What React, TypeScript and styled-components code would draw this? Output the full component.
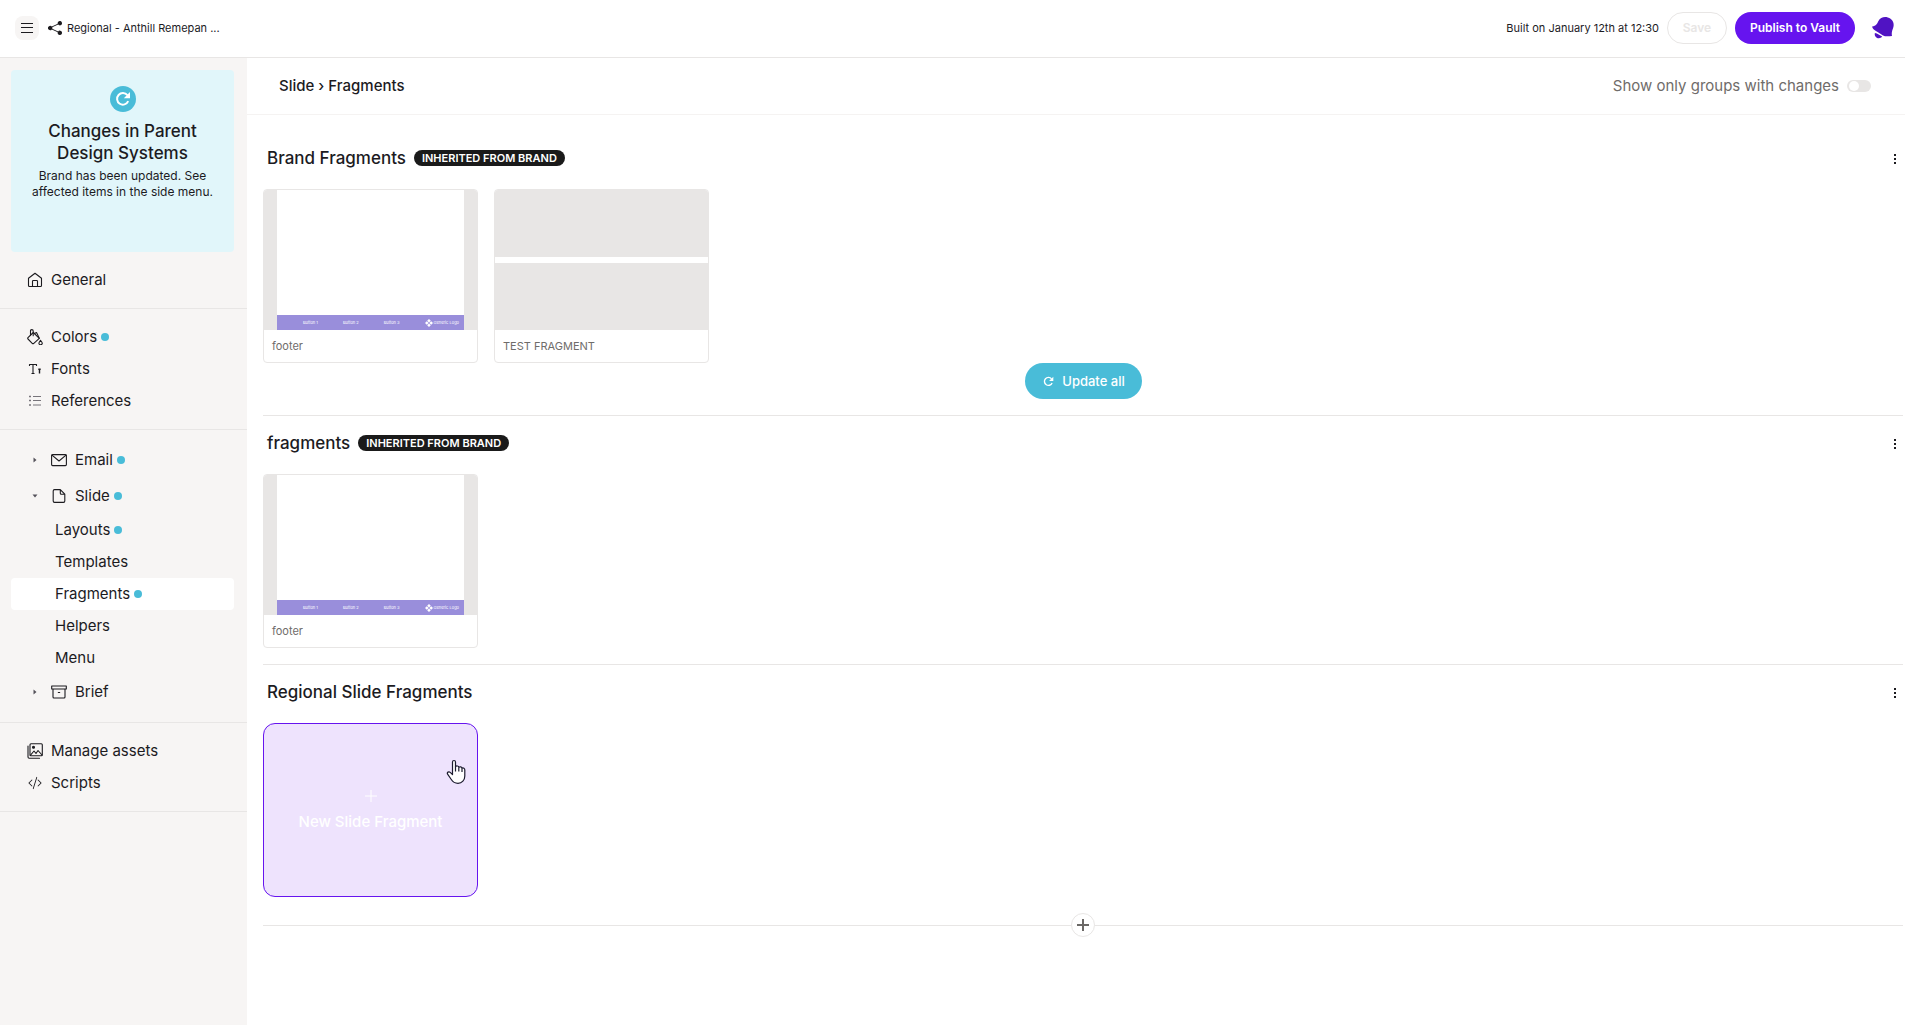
import React from "react";
import styled, { createGlobalStyle, css } from "styled-components";
import { BsCodeSlash, BsShareFill } from "react-icons/bs";

const ink = "#1c1b1f";
const line = "#e8e6e5";
const teal = "#49bcd8";
const violet = "#6614ef";

const GlobalStyle = createGlobalStyle`
  * { box-sizing: border-box; }
  html, body { margin: 0; height: 100%; }
  #root { min-height: 100%; }
  body {
    background: #fff;
    color: ${ink};
    font-family: Inter, "Liberation Sans", sans-serif;
    font-size: 15px;
    line-height: 20px;
  }
  button { font-family: inherit; cursor: pointer; }
  svg { display: block; flex: none; }
`;

const Page = styled.div`
  display: flex;
  flex-direction: column;
  min-height: 100vh;
`;

const TopBar = styled.header`
  display: flex;
  align-items: center;
  justify-content: space-between;
  height: 58px;
  padding: 0 10px 2px 15px;
  border-bottom: 1px solid ${line};
`;

const BarGroup = styled.div<{ $gap: number }>`
  display: flex;
  align-items: center;
  gap: ${(p) => p.$gap}px;
`;

const MenuButton = styled.button`
  display: grid;
  place-items: center;
  width: 24px;
  height: 24px;
  margin-right: 4px;
  padding: 0;
  border: 0;
  border-radius: 8px;
  background: #f7f5f4;
  color: ${ink};
`;

const SmallText = styled.span`
  font-size: 11px;
  line-height: 16px;
`;

const Pill = styled.button<{ $kind: "outline" | "primary" | "update" }>`
  display: flex;
  align-items: center;
  justify-content: center;
  gap: 8px;
  height: 32px;
  padding: 0;
  border: 1px solid transparent;
  border-radius: 18px;
  font-size: 12px;
  font-weight: 600;
  line-height: 16px;
  color: #fff;
  ${(p) =>
    p.$kind === "outline" &&
    css`
      width: 60px;
      border-color: ${line};
      background: #fff;
      color: ${line};
    `}
  ${(p) =>
    p.$kind === "primary" &&
    css`
      width: 120px;
      background: ${violet};
    `}
  ${(p) =>
    p.$kind === "update" &&
    css`
      width: 117px;
      height: 36px;
      padding-left: 2px;
      background: ${teal};
      font-size: 13px;
      font-weight: 500;
    `}
`;

const BellButton = styled.button`
  display: grid;
  place-items: center;
  width: 24px;
  height: 24px;
  margin-left: 8px;
  padding: 0;
  border: 0;
  background: none;
`;

const Body = styled.div`
  display: flex;
  flex: 1;
`;

const Sidebar = styled.aside`
  flex: none;
  width: 247px;
  padding-top: 12px;
  background: #f7f5f4;
`;

const Notice = styled.section`
  display: flex;
  flex-direction: column;
  align-items: center;
  min-height: 182px;
  margin: 0 13px 0 11px;
  padding: 16px 12px;
  border-radius: 4px;
  background: #e1f6fa;
  text-align: center;
`;

const NoticeIcon = styled.span`
  display: grid;
  place-items: center;
  width: 26px;
  height: 26px;
  margin-bottom: 8px;
  border-radius: 50%;
  background: ${teal};
  color: #fff;
`;

const NoticeTitle = styled.h2`
  margin: 0 0 4px;
  max-width: 170px;
  font-size: 17px;
  font-weight: 500;
  line-height: 22px;
`;

const NoticeText = styled.p`
  margin: 0;
  font-size: 12px;
  line-height: 16px;
`;

const NavGroup = styled.ul`
  margin: 0;
  padding: 12px 13px 12px 11px;
  border-bottom: 1px solid ${line};
  list-style: none;
`;

const NavLink = styled.a<{ $level: "top" | "branch" | "leaf"; $active?: boolean }>`
  display: flex;
  align-items: center;
  height: ${(p) => (p.$level === "branch" ? 36 : 32)}px;
  padding-left: ${(p) => (p.$level === "leaf" ? 44 : 16)}px;
  border-radius: 4px;
  background: ${(p) => (p.$active ? "#fff" : "transparent")};
  color: ${ink};
  text-decoration: none;
`;

const IconSlot = styled.span`
  display: grid;
  place-items: center;
  width: 16px;
  margin-right: 8px;
`;

const Dot = styled.span`
  width: 8px;
  height: 8px;
  margin-left: 4px;
  border-radius: 50%;
  background: ${teal};
`;

const Main = styled.main`
  flex: 1;
  min-width: 0;
`;

const CrumbBar = styled.div`
  display: flex;
  align-items: center;
  justify-content: space-between;
  height: 57px;
  padding: 0 34px 0 32px;
  border-bottom: 1px solid #f5f3f2;
`;

const Crumbs = styled.nav`
  display: flex;
  gap: 4px;
  font-weight: 500;

  a {
    color: inherit;
    text-decoration: none;
  }
`;

const SwitchLabel = styled.label`
  display: flex;
  align-items: center;
  gap: 8px;
  color: #6f6c6a;
`;

const Switch = styled.input`
  appearance: none;
  display: flex;
  align-items: center;
  width: 24px;
  height: 12px;
  margin: 0;
  padding: 0 2px;
  border-radius: 6px;
  background: ${line};

  &::before {
    content: "";
    width: 10px;
    height: 10px;
    border-radius: 50%;
    background: #fff;
  }

  &:checked {
    justify-content: flex-end;
    background: ${teal};
  }
`;

const Groups = styled.div`
  padding: 16px 2px 0 16px;
`;

const Group = styled.section<{ $last?: boolean }>`
  display: flex;
  flex-direction: column;
  padding-bottom: 16px;
  border-bottom: ${(p) => (p.$last ? 0 : 1)}px solid ${line};
`;

const GroupHead = styled.header`
  display: flex;
  align-items: center;
  gap: 8px;
  height: 54px;
  margin-bottom: 4px;
  padding-left: 4px;
`;

const GroupTitle = styled.h2`
  margin: 0;
  font-size: 17px;
  font-weight: 500;
  line-height: 24px;
`;

const Tag = styled.span`
  padding: 0 8px;
  border-radius: 8px;
  background: #1a1a1a;
  color: #fff;
  font-size: 11px;
  font-weight: 600;
  line-height: 16px;
  text-transform: uppercase;
`;

const MoreButton = styled.button`
  display: grid;
  place-items: center;
  width: 16px;
  height: 24px;
  margin-left: auto;
  padding: 1px 0 0;
  border: 0;
  background: none;
  color: ${ink};
`;

const Cards = styled.div`
  display: flex;
  flex-wrap: wrap;
  gap: 16px;
`;

const Card = styled.article`
  width: 215px;
  border: 1px solid ${line};
  border-radius: 4px;
  overflow: hidden;
`;

const Preview = styled.div<{ $kind: "slide" | "band" }>`
  display: flex;
  flex-direction: column;
  justify-content: ${(p) => (p.$kind === "slide" ? "stretch" : "center")};
  height: 140px;
  padding: ${(p) => (p.$kind === "slide" ? "0 13px" : "0")};
  background: ${line};
`;

const Slide = styled.div`
  display: flex;
  flex: 1;
  flex-direction: column;
  justify-content: flex-end;
  background: #fff;
`;

const SlideFooter = styled.div`
  display: flex;
  align-items: center;
  justify-content: space-between;
  height: 15px;
  padding: 0 5px 0 26px;
  background: #998edb;
  color: #fff;
  font-size: 4px;
  line-height: 6px;
`;

const SlideLogo = styled.span`
  display: flex;
  align-items: center;
  gap: 1px;
`;

const Band = styled.div`
  height: 6px;
  background: #fff;
`;

const CardName = styled.h3`
  margin: 0;
  padding: 8px;
  color: #6f6c6a;
  font-size: 11px;
  font-weight: 400;
  line-height: 16px;
`;

const UpdateRow = styled.div`
  display: flex;
  justify-content: center;
`;

const NewCard = styled.button`
  position: relative;
  display: flex;
  flex-direction: column;
  align-items: center;
  justify-content: center;
  gap: 10px;
  width: 215px;
  height: 174px;
  padding: 2px 0 0;
  border: 1px solid ${violet};
  border-radius: 12px;
  background: #eee3fd;
  color: #fff;
  font-size: 15px;
  font-weight: 500;
  line-height: 20px;
`;

const Pointer = styled.svg`
  position: absolute;
  top: 35px;
  right: 11px;
`;

const AddRow = styled.div`
  display: flex;
  align-items: center;

  &::before,
  &::after {
    content: "";
    flex: 1;
    height: 1px;
    background: ${line};
  }
`;

const AddButton = styled.button`
  display: grid;
  place-items: center;
  width: 24px;
  height: 24px;
  padding: 0;
  border: 1px solid ${line};
  border-radius: 50%;
  background: #fff;
  color: #6b6866;
`;

const Refresh = ({ size, weight }: { size: number; weight: number }) => (
  <svg width={size} height={size} viewBox="0 0 16 16" fill="none" stroke="currentColor" strokeWidth={weight} aria-hidden>
    <path d="M13.2 10.2A5.8 5.8 0 1 1 12.4 4.2" />
    <path d="M15 1v6.2H8.8z" fill="currentColor" stroke="none" />
  </svg>
);

const Plus = ({ weight = 1 }: { weight?: number }) => (
  <svg width="12" height="12" viewBox="0 0 12 12" stroke="currentColor" strokeWidth={weight} aria-hidden>
    <path d="M6 0v12M0 6h12" />
  </svg>
);

const Bell = () => (
  <svg width="24" height="24" viewBox="0 0 24 24" fill="#5013c3" aria-hidden>
    <path d="M1.1 10.6C5.2 10 6.3 7.4 7.3 5.3C9.2 1.500 13 .4 16.800 1.400C21 2.500 23.200 6.200 22.600 10.100C22.200 13.200 20.200 15.300 21 20.100C17 20.300 14.300 20.700 11.500 19.200C9 17.700 7.900 16.800 5.300 15.300C3.200 14 1.400 12.700 1.100 10.600Z" />
    <path d="M3.9 17C6.500 17.300 8.800 19.200 11.200 20.600C10 22.400 7.500 22.800 5.700 21.700C4.100 20.700 3.300 18.800 3.900 17Z" />
  </svg>
);

const LineIcon = ({ children }: { children: React.ReactNode }) => (
  <svg width="16" height="16" viewBox="0 0 16 16" fill="none" stroke="currentColor" strokeWidth="1.1" strokeLinejoin="round" strokeLinecap="round" aria-hidden>
    {children}
  </svg>
);

const HomeIcon = () => (
  <LineIcon>
    <path d="M1.500 6.300L8 1.300L14.500 6.300V13.500Q14.500 14.500 13.500 14.500H2.500Q1.500 14.500 1.500 13.500Z" />
    <path d="M5.500 14.500V9.300Q5.500 8.500 6.300 8.500H9.700Q10.500 8.500 10.500 9.300V14.500" />
  </LineIcon>
);

const BucketIcon = () => (
  <LineIcon>
    <path d="M6.300 3.500L12.300 9.300L6.800 14.300Q6 15 5.200 14.300L1 10Q.3 9.300 1 8.600Z" />
    <path d="M3.500 6.300V2Q3.500 .6 4.800 .6Q6.200 .6 6.200 2V6.800M7.500 4.600L9.500 3.600L12.300 9.300" />
    <path d="M13.500 11.300Q15.300 13.400 15.300 14.200A1.700 1.500 0 0 1 11.900 14.200Q11.900 13.400 13.500 11.300Z" />
  </LineIcon>
);

const FontSizeIcon = () => (
  <LineIcon>
    <path d="M2.500 5V3.500H9.500V5M6 3.500V12.500M4.500 12.500H7.500" strokeLinecap="butt" />
    <path d="M12.500 7.500V12.500M11.300 8.300H13.700" strokeWidth="1.400" strokeLinecap="butt" />
  </LineIcon>
);

const ListIcon = () => (
  <svg width="12" height="12" viewBox="0 0 12 12" fill="none" stroke="#77747a" aria-hidden>
    <path d="M4 1.500H12M4 5.500H12M4 10H12" />
    <path d="M0 1.500H2M0 5.500H2M0 10H2" strokeWidth="1.500" />
  </svg>
);

const MailIcon = () => (
  <LineIcon>
    <rect x=".6" y="2.6" width="14.800" height="11" rx="1" />
    <path d="M1 3.200L8 9L15 3.200" />
  </LineIcon>
);

const FileIcon = () => (
  <LineIcon>
    <path d="M9.300 1.600H3.500Q2.200 1.600 2.200 2.900V13.100Q2.200 14.400 3.500 14.400H12.500Q13.800 14.400 13.800 13.100V6.200ZM9.300 1.600V5.200Q9.300 6.200 10.300 6.200H13.800" />
  </LineIcon>
);

const BriefIcon = () => (
  <LineIcon>
    <path d="M.7 2H15.300V5H.7ZM2 5V13Q2 14 3 14H13Q14 14 14 13V5M7.300 8.500H8.700" />
  </LineIcon>
);

const ImagesIcon = () => (
  <LineIcon>
    <rect x="3" y=".7" width="12.300" height="12" rx="1" />
    <path d="M1 3V14Q1 15.200 2.200 15.200H12.500M3.300 12.300L7 8L9 10.500L11 7.500L15 12" />
    <circle cx="6.500" cy="4.300" r="1" fill="currentColor" />
  </LineIcon>
);

const Caret = ({ open }: { open?: boolean }) => (
  <svg width="6" height="6" viewBox="0 0 6 6" fill="#55525a" aria-hidden>
    <path d={open ? "M.5 1.500H5.500L3 4.500z" : "M1.500 .5V5.500L4.500 3z"} />
  </svg>
);

type Item = {
  label: string;
  icon?: React.ReactNode;
  level?: "top" | "branch" | "leaf";
  open?: boolean;
  changed?: boolean;
  active?: boolean;
};

const nav: Item[][] = [
  [{ label: "General", icon: <HomeIcon /> }],
  [
    { label: "Colors", icon: <BucketIcon />, changed: true },
    { label: "Fonts", icon: <FontSizeIcon /> },
    { label: "References", icon: <ListIcon /> },
  ],
  [
    { label: "Email", icon: <MailIcon />, level: "branch", changed: true },
    { label: "Slide", icon: <FileIcon />, level: "branch", open: true, changed: true },
    { label: "Layouts", level: "leaf", changed: true },
    { label: "Templates", level: "leaf" },
    { label: "Fragments", level: "leaf", changed: true, active: true },
    { label: "Helpers", level: "leaf" },
    { label: "Menu", level: "leaf" },
    { label: "Brief", icon: <BriefIcon />, level: "branch" },
  ],
  [
    { label: "Manage assets", icon: <ImagesIcon /> },
    { label: "Scripts", icon: <BsCodeSlash size={14} /> },
  ],
];

const NavItem = ({ label, icon, level = "top", open, changed, active }: Item) => (
  <li>
    <NavLink href="#" $level={level} $active={active} aria-current={active ? "page" : undefined}>
      {level === "branch" && (
        <IconSlot>
          <Caret open={open} />
        </IconSlot>
      )}
      {icon && <IconSlot>{icon}</IconSlot>}
      {label}
      {changed && <Dot />}
    </NavLink>
  </li>
);

const FooterCard = () => (
  <Card>
    <Preview $kind="slide">
      <Slide>
        <SlideFooter>
          <span>Button 1</span>
          <span>Button 2</span>
          <span>Button 3</span>
          <SlideLogo>
            <svg width="8" height="8" viewBox="0 0 8 8" fill="#fff" aria-hidden>
              <path d="M4 0L5.800 1.800L4 3.600L2.200 1.800ZM4 4.400L5.800 6.200L4 8L2.200 6.200ZM1.800 2.200L3.600 4L1.800 5.800L0 4ZM6.200 2.200L8 4L6.200 5.800L4.400 4Z" />
            </svg>
            Generic Logo
          </SlideLogo>
        </SlideFooter>
      </Slide>
    </Preview>
    <CardName>footer</CardName>
  </Card>
);

const GroupHeader = ({ title, inherited }: { title: string; inherited?: boolean }) => (
  <GroupHead>
    <GroupTitle>{title}</GroupTitle>
    {inherited && <Tag>Inherited from Brand</Tag>}
    <MoreButton aria-label={`${title} options`}>
      <svg width="4" height="12" viewBox="0 0 4 12" fill="currentColor" aria-hidden>
        <path d="M1 1h2v2H1zM1 5h2v2H1zM1 9h2v2H1z" />
      </svg>
    </MoreButton>
  </GroupHead>
);

export default function App() {
  return (
    <Page>
      <GlobalStyle />
      <TopBar>
        <BarGroup $gap={5}>
          <MenuButton aria-label="Open menu">
            <svg width="12" height="10" viewBox="0 0 12 10" stroke="currentColor" aria-hidden>
              <path d="M0 .5H12M0 4.500H12M0 9.500H12" />
            </svg>
          </MenuButton>
          <BsShareFill size={14} />
          <SmallText>Regional - Anthill Remepan ...</SmallText>
        </BarGroup>
        <BarGroup $gap={8}>
          <SmallText>Built on January 12th at 12:30</SmallText>
          <Pill $kind="outline" disabled>Save</Pill>
          <Pill $kind="primary">Publish to Vault</Pill>
          <BellButton aria-label="Notifications">
            <Bell />
          </BellButton>
        </BarGroup>
      </TopBar>
      <Body>
        <Sidebar>
          <Notice>
            <NoticeIcon>
              <Refresh size={16} weight={2} />
            </NoticeIcon>
            <NoticeTitle>Changes in Parent Design Systems</NoticeTitle>
            <NoticeText>Brand has been updated. See affected items in the side menu.</NoticeText>
          </Notice>
          <nav aria-label="Design system">
            {nav.map((group, i) => (
              <NavGroup key={i}>
                {group.map((item) => (
                  <NavItem key={item.label} {...item} />
                ))}
              </NavGroup>
            ))}
          </nav>
        </Sidebar>
        <Main>
          <CrumbBar>
            <Crumbs aria-label="Breadcrumb">
              <a href="#">Slide</a>
              <span>›</span>
              <span>Fragments</span>
            </Crumbs>
            <SwitchLabel>
              Show only groups with changes
              <Switch type="checkbox" role="switch" />
            </SwitchLabel>
          </CrumbBar>
          <Groups>
            <Group>
              <GroupHeader title="Brand Fragments" inherited />
              <Cards>
                <FooterCard />
                <Card>
                  <Preview $kind="band">
                    <Band />
                  </Preview>
                  <CardName>TEST FRAGMENT</CardName>
                </Card>
              </Cards>
              <UpdateRow>
                <Pill $kind="update">
                  <Refresh size={11} weight={2} />
                  Update all
                </Pill>
              </UpdateRow>
            </Group>
            <Group>
              <GroupHeader title="fragments" inherited />
              <Cards>
                <FooterCard />
              </Cards>
            </Group>
            <Group $last>
              <GroupHeader title="Regional Slide Fragments" />
              <Cards>
                <NewCard>
                  <Plus />
                  New Slide Fragment
                  <Pointer width="20" height="26" viewBox="0 0 20 26" fill="#fff" stroke="#1c1b2f" strokeWidth="1.2" strokeLinejoin="round" aria-hidden>
                    <path d="M6.500 15.500V3C6.500 1 9.500 1 9.500 3V7.500C10.500 6.600 12.500 6.800 12.800 8.200C14 7.400 15.800 7.900 16 9.200C17.400 8.600 18.800 9.300 18.800 11V17C18.800 21 16 24.300 12 24.300C8.500 24.300 6.800 23 5.300 20.500L1.600 15.200C.6 13.300 2.800 12.200 4.200 13.400z" />
                    <path d="M9.500 7.500V12.500M12.800 8.200V12.500M16 9.200V13" fill="none" />
                  </Pointer>
                </NewCard>
              </Cards>
            </Group>
            <AddRow>
              <AddButton aria-label="Add group">
                <Plus weight={2} />
              </AddButton>
            </AddRow>
          </Groups>
        </Main>
      </Body>
    </Page>
  );
}
